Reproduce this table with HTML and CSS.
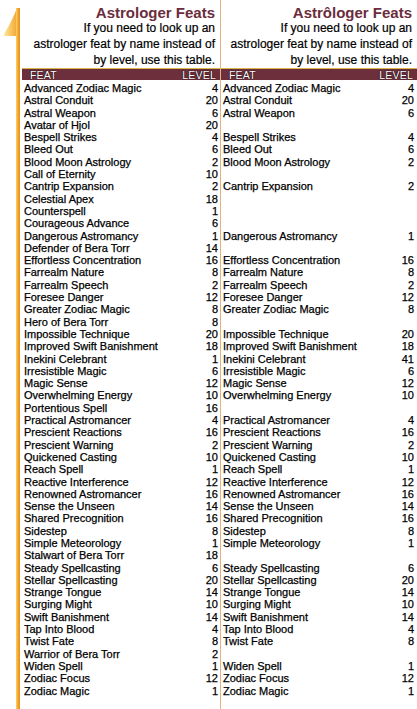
FILE: index.html
```html
<!DOCTYPE html>
<html>
<head>
<meta charset="utf-8">
<link rel="stylesheet" href="styles.css">
</head>
<body>
<div class="page">
  <div class="rail">
    <svg class="arrow" width="22" height="40" viewBox="0 0 22 40">
      <defs>
        <linearGradient id="ag" x1="0" y1="0" x2="1" y2="0">
          <stop offset="0" stop-color="#fde79a"/>
          <stop offset="1" stop-color="#f2a634"/>
        </linearGradient>
        <linearGradient id="bg" x1="0" y1="0" x2="1" y2="0">
          <stop offset="0" stop-color="#fbd36a"/>
          <stop offset="0.5" stop-color="#f4a530"/>
          <stop offset="1" stop-color="#e8901c"/>
        </linearGradient>
      </defs>
      <path d="M17 8 C14 16 9 26 4 34 L4 36 L16 36 Z" fill="url(#ag)"/>
      <rect x="16" y="8" width="4" height="32" fill="url(#bg)"/>
    </svg>
    <div class="bar"></div>
  </div>

  <div class="col col-left">
    <div class="title">Astrologer Feats</div>
    <div class="desc">If you need to look up an<br>astrologer feat by name instead of<br>by level, use this table.</div>
    <div class="thead"><span>FEAT</span><span>LEVEL</span></div>
    <div class="rows">
      <div class="row"><span>Advanced Zodiac Magic</span><span>4</span></div>
      <div class="row"><span>Astral Conduit</span><span>20</span></div>
      <div class="row"><span>Astral Weapon</span><span>6</span></div>
      <div class="row"><span>Avatar of Hjol</span><span>20</span></div>
      <div class="row"><span>Bespell Strikes</span><span>4</span></div>
      <div class="row"><span>Bleed Out</span><span>6</span></div>
      <div class="row"><span>Blood Moon Astrology</span><span>2</span></div>
      <div class="row"><span>Call of Eternity</span><span>10</span></div>
      <div class="row"><span>Cantrip Expansion</span><span>2</span></div>
      <div class="row"><span>Celestial Apex</span><span>18</span></div>
      <div class="row"><span>Counterspell</span><span>1</span></div>
      <div class="row"><span>Courageous Advance</span><span>6</span></div>
      <div class="row"><span>Dangerous Astromancy</span><span>1</span></div>
      <div class="row"><span>Defender of Bera Torr</span><span>14</span></div>
      <div class="row"><span>Effortless Concentration</span><span>16</span></div>
      <div class="row"><span>Farrealm Nature</span><span>8</span></div>
      <div class="row"><span>Farrealm Speech</span><span>2</span></div>
      <div class="row"><span>Foresee Danger</span><span>12</span></div>
      <div class="row"><span>Greater Zodiac Magic</span><span>8</span></div>
      <div class="row"><span>Hero of Bera Torr</span><span>8</span></div>
      <div class="row"><span>Impossible Technique</span><span>20</span></div>
      <div class="row"><span>Improved Swift Banishment</span><span>18</span></div>
      <div class="row"><span>Inekini Celebrant</span><span>1</span></div>
      <div class="row"><span>Irresistible Magic</span><span>6</span></div>
      <div class="row"><span>Magic Sense</span><span>12</span></div>
      <div class="row"><span>Overwhelming Energy</span><span>10</span></div>
      <div class="row"><span>Portentious Spell</span><span>16</span></div>
      <div class="row"><span>Practical Astromancer</span><span>4</span></div>
      <div class="row"><span>Prescient Reactions</span><span>16</span></div>
      <div class="row"><span>Prescient Warning</span><span>2</span></div>
      <div class="row"><span>Quickened Casting</span><span>10</span></div>
      <div class="row"><span>Reach Spell</span><span>1</span></div>
      <div class="row"><span>Reactive Interference</span><span>12</span></div>
      <div class="row"><span>Renowned Astromancer</span><span>16</span></div>
      <div class="row"><span>Sense the Unseen</span><span>14</span></div>
      <div class="row"><span>Shared Precognition</span><span>16</span></div>
      <div class="row"><span>Sidestep</span><span>8</span></div>
      <div class="row"><span>Simple Meteorology</span><span>1</span></div>
      <div class="row"><span>Stalwart of Bera Torr</span><span>18</span></div>
      <div class="row"><span>Steady Spellcasting</span><span>6</span></div>
      <div class="row"><span>Stellar Spellcasting</span><span>20</span></div>
      <div class="row"><span>Strange Tongue</span><span>14</span></div>
      <div class="row"><span>Surging Might</span><span>10</span></div>
      <div class="row"><span>Swift Banishment</span><span>14</span></div>
      <div class="row"><span>Tap Into Blood</span><span>4</span></div>
      <div class="row"><span>Twist Fate</span><span>8</span></div>
      <div class="row"><span>Warrior of Bera Torr</span><span>2</span></div>
      <div class="row"><span>Widen Spell</span><span>1</span></div>
      <div class="row"><span>Zodiac Focus</span><span>12</span></div>
      <div class="row"><span>Zodiac Magic</span><span>1</span></div>
    </div>
  </div>

  <div class="sep"></div>

  <div class="col col-right">
    <div class="title">Astrôloger Feats</div>
    <div class="desc">If you need to look up an<br>astrologer feat by name instead of<br>by level, use this table.</div>
    <div class="thead"><span>FEAT</span><span>LEVEL</span></div>
    <div class="rows">
      <div class="row"><span>Advanced Zodiac Magic</span><span>4</span></div>
      <div class="row"><span>Astral Conduit</span><span>20</span></div>
      <div class="row"><span>Astral Weapon</span><span>6</span></div>
      <div class="row"></div>
      <div class="row"><span>Bespell Strikes</span><span>4</span></div>
      <div class="row"><span>Bleed Out</span><span>6</span></div>
      <div class="row"><span>Blood Moon Astrology</span><span>2</span></div>
      <div class="row"></div>
      <div class="row"><span>Cantrip Expansion</span><span>2</span></div>
      <div class="row"></div>
      <div class="row"></div>
      <div class="row"></div>
      <div class="row"><span>Dangerous Astromancy</span><span>1</span></div>
      <div class="row"></div>
      <div class="row"><span>Effortless Concentration</span><span>16</span></div>
      <div class="row"><span>Farrealm Nature</span><span>8</span></div>
      <div class="row"><span>Farrealm Speech</span><span>2</span></div>
      <div class="row"><span>Foresee Danger</span><span>12</span></div>
      <div class="row"><span>Greater Zodiac Magic</span><span>8</span></div>
      <div class="row"></div>
      <div class="row"><span>Impossible Technique</span><span>20</span></div>
      <div class="row"><span>Improved Swift Banishment</span><span>18</span></div>
      <div class="row"><span>Inekini Celebrant</span><span>41</span></div>
      <div class="row"><span>Irresistible Magic</span><span>6</span></div>
      <div class="row"><span>Magic Sense</span><span>12</span></div>
      <div class="row"><span>Overwhelming Energy</span><span>10</span></div>
      <div class="row"></div>
      <div class="row"><span>Practical Astromancer</span><span>4</span></div>
      <div class="row"><span>Prescient Reactions</span><span>16</span></div>
      <div class="row"><span>Prescient Warning</span><span>2</span></div>
      <div class="row"><span>Quickened Casting</span><span>10</span></div>
      <div class="row"><span>Reach Spell</span><span>1</span></div>
      <div class="row"><span>Reactive Interference</span><span>12</span></div>
      <div class="row"><span>Renowned Astromancer</span><span>16</span></div>
      <div class="row"><span>Sense the Unseen</span><span>14</span></div>
      <div class="row"><span>Shared Precognition</span><span>16</span></div>
      <div class="row"><span>Sidestep</span><span>8</span></div>
      <div class="row"><span>Simple Meteorology</span><span>1</span></div>
      <div class="row"></div>
      <div class="row"><span>Steady Spellcasting</span><span>6</span></div>
      <div class="row"><span>Stellar Spellcasting</span><span>20</span></div>
      <div class="row"><span>Strange Tongue</span><span>14</span></div>
      <div class="row"><span>Surging Might</span><span>10</span></div>
      <div class="row"><span>Swift Banishment</span><span>14</span></div>
      <div class="row"><span>Tap Into Blood</span><span>4</span></div>
      <div class="row"><span>Twist Fate</span><span>8</span></div>
      <div class="row"></div>
      <div class="row"><span>Widen Spell</span><span>1</span></div>
      <div class="row"><span>Zodiac Focus</span><span>12</span></div>
      <div class="row"><span>Zodiac Magic</span><span>1</span></div>
    </div>
  </div>
</div>
</body>
</html>
```

FILE: styles.css
```css
html, body {
  margin: 0;
  padding: 0;
  background: #ffffff;
}

body {
  font-family: "Liberation Sans", Arial, sans-serif;
  color: #111111;
  width: 417px;
  height: 709px;
  overflow: hidden;
}

.page {
  display: flex;
  height: 709px;
}

.rail {
  width: 22px;
  flex: none;
  display: flex;
  flex-direction: column;
}

.arrow {
  display: block;
  flex: none;
}

.bar {
  flex: 1;
  width: 4px;
  margin-left: 16px;
  background: linear-gradient(to right, #fbd36a, #f4a530 50%, #e8901c);
}

.col {
  display: flex;
  flex-direction: column;
  padding-top: 5px;
}

.col-left {
  width: 198px;
}

.col-right {
  width: 196px;
}

.sep {
  width: 1px;
  flex: none;
  background: #e6b17e;
}

.title {
  text-align: right;
  font-size: 15px;
  font-weight: bold;
  line-height: 15px;
  color: #6b2c3c;
  padding-right: 5px;
}

.desc {
  text-align: right;
  font-size: 12px;
  line-height: 16px;
  color: #000000;
  padding-right: 5px;
  -webkit-text-stroke: 0.2px #000000;
}

.thead {
  display: flex;
  justify-content: space-between;
  height: 11px;
  line-height: 12px;
  background: #6e2f3c;
  border-top: 1px solid #d8b44a;
  font-size: 10.5px;
  color: #ffffff;
  padding: 0 4px 0 8px;
  text-shadow: 0 0 1px #000, 0 0 1px #000;
  letter-spacing: 0.2px;
}

.rows {
  margin-top: 2px;
}

.row {
  display: flex;
  justify-content: space-between;
  height: 12.3px;
  line-height: 12.3px;
  font-size: 11px;
  padding: 0 2px;
  color: #000000;
  -webkit-text-stroke: 0.25px #000000;
}

.col-right .row {
  padding: 0 3px 0 2px;
}
```
